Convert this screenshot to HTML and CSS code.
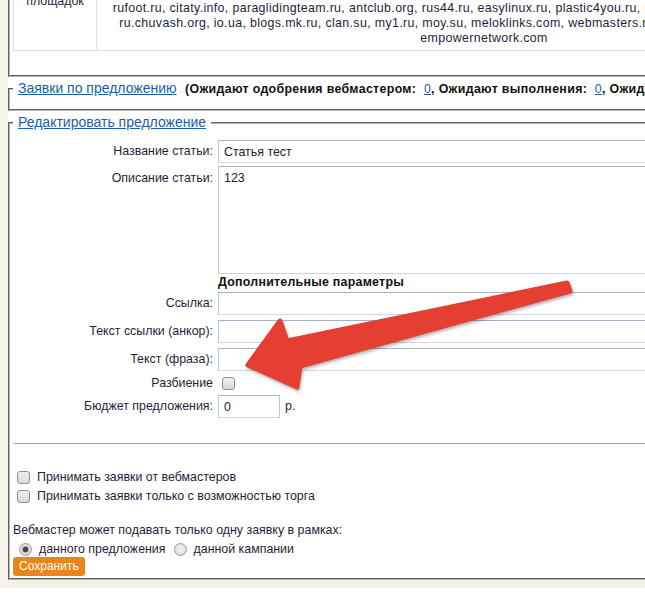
FILE: index.html
```html
<!DOCTYPE html>
<html lang="ru">
<head>
<meta charset="utf-8">
<title>Редактировать предложение</title>
<link rel="stylesheet" href="styles.css">
</head>
<body>
<div class="page">
  <div class="content">
    <fieldset class="fs fs-sites">
      <div class="sites">
        <div class="sites-label">Список<br>площадок</div>
        <div class="sites-list">
          <div>seoforum.ru, linkfeed.ru, blogun.ru, rotapost.ru, miralinks.ru, gogetlinks.net, sape.ru, liex.ru, seopult.ru,</div>
          <div>megaindex.ru, rookee.ru, prospero.ru, forum.searchengines.ru, mastertalk.ru, maultalk.com, nulled.cc, ucoz.ru,</div>
          <div>livejournal.com, liveinternet.ru, diary.ru, blogspot.com, wordpress.com, do.am, at.ua, 3dn.ru, ucoz.net,</div>
          <div>forum.ykt.ru, forum.e1.ru, forum.sibmama.ru, forum.littleone.ru, forum.auto.ru, forum.ixbt.com,</div>
          <div>rufoot.ru, citaty.info, paraglidingteam.ru, antclub.org, rus44.ru, easylinux.ru, plastic4you.ru, rusfishing.ru, avtoforum.spb.ru, i.ua,</div>
          <div>ru.chuvash.org, io.ua, blogs.mk.ru, clan.su, my1.ru, moy.su, meloklinks.com, webmasters.ru, forum.sakh.com, vsem.ru, kz.ru,</div>
          <div>empowernetwork.com</div>
        </div>
      </div>
    </fieldset>

    <fieldset class="fs fs-bids">
      <legend><a href="#" class="legend-link">Заявки по предложению</a> <b class="stats">(Ожидают одобрения вебмастером: &nbsp;<a href="#">0</a>, Ожидают выполнения: &nbsp;<a href="#">0</a>, Ожидают проверки: &nbsp;<a href="#">0</a>)</b></legend>
    </fieldset>

    <fieldset class="fs fs-edit">
      <legend><a href="#" class="legend-link">Редактировать предложение</a></legend>
      <div class="form">
        <div class="row r-title">
          <label class="lbl" for="title">Название статьи:</label>
          <input class="txt" id="title" type="text" value="Статья тест">
        </div>
        <div class="row r-desc">
          <label class="lbl lbl-top" for="desc">Описание статьи:</label>
          <textarea class="area" id="desc">123</textarea>
        </div>
        <div class="row r-head">
          <span class="lbl"></span>
          <b class="subhead">Дополнительные параметры</b>
        </div>
        <div class="row r-link">
          <label class="lbl" for="link">Ссылка:</label>
          <input class="txt" id="link" type="text">
        </div>
        <div class="row r-more">
          <label class="lbl" for="anchor">Текст ссылки (анкор):</label>
          <input class="txt" id="anchor" type="text">
        </div>
        <div class="row r-more">
          <label class="lbl" for="phrase">Текст (фраза):</label>
          <input class="txt" id="phrase" type="text">
        </div>
        <div class="row r-split">
          <label class="lbl" for="split">Разбиение</label>
          <input class="cb cb-form" id="split" type="checkbox">
        </div>
        <div class="row r-budget">
          <label class="lbl" for="budget">Бюджет предложения:</label>
          <input class="txt txt-short" id="budget" type="text" value="0">
          <span class="cur">р.</span>
        </div>
      </div>

      <hr class="sep">

      <div class="opts">
        <label class="opt"><input class="cb" type="checkbox">Принимать заявки от вебмастеров</label>
        <label class="opt"><input class="cb" type="checkbox">Принимать заявки только с возможностью торга</label>
      </div>

      <p class="note">Вебмастер может подавать только одну заявку в рамках:</p>
      <div class="radios">
        <label class="opt"><input class="rb" type="radio" name="scope" checked>данного предложения</label>
        <label class="opt"><input class="rb" type="radio" name="scope">данной кампании</label>
      </div>
      <button class="save" type="button">Сохранить</button>
    </fieldset>
  </div>
</div>

<svg class="arrow" width="645" height="615" viewBox="0 0 645 615" aria-hidden="true">
  <polygon points="567,283 287,341 280,321 248,365 297,387 300,366 570,291" />
</svg>
</body>
</html>
```

FILE: styles.css
```css
* { box-sizing: border-box; }

html {
  overflow: hidden;
  background: #fff;
}

body {
  margin: 0;
  font: 12.4px/15px "Liberation Sans", Arial, sans-serif;
  color: #1f1f38;
}

a {
  color: #1d5ea8;
  text-decoration: underline;
}

.page {
  width: 1100px;
  margin-top: -70px;
  padding: 0 0 4px 8px;
  background: #f4f2eb;
}

.content {
  background: #fff;
}

.fs {
  margin: 0 0 4px;
  padding: 4px 3px 9px;
  border: 2px groove #b4b4b4;
  min-width: 0;
}

.fs legend {
  height: 15px;
  padding: 0 5px;
  line-height: 15px;
  white-space: nowrap;
}

/* sites table */
.fs-sites {
  padding-bottom: 24px;
}

.sites {
  display: grid;
  grid-template-columns: 83px 774px;
  border: 1px solid #dedede;
}

.sites-label {
  display: flex;
  align-items: center;
  justify-content: center;
  text-align: center;
  border-right: 1px solid #dedede;
}

.sites-list {
  padding: 4px;
  text-align: center;
  white-space: nowrap;
  letter-spacing: 0.35px;
}

/* legends */
.legend-link {
  font-size: 14px;
  line-height: 15px;
}

.stats {
  margin-left: 5px;
  color: #111;
  letter-spacing: 0.33px;
}

.stats a {
  font-weight: normal;
}

/* form */
.form {
  margin-top: 6px;
}

.row {
  display: flex;
  align-items: center;
}

.lbl {
  flex: none;
  width: 200px;
  margin-right: 5px;
  text-align: right;
}

.lbl-top {
  align-self: flex-start;
  padding-top: 5px;
}

.r-desc { margin-top: 3px; }
.r-head { margin-top: 1px; }
.r-link { margin-top: 2px; }
.r-more { margin-top: 5px; }
.r-split { margin-top: 5px; }
.r-budget { margin-top: 4px; }

.subhead {
  color: #111;
  letter-spacing: 0.25px;
}

.txt,
.area {
  width: 620px;
  font: 12.4px/15px "Liberation Sans", Arial, sans-serif;
  color: #222;
  background: #fff;
  border: 1px solid;
  border-color: #a3b2c8 #bcc7d6 #cfd6e1 #bcc7d6;
  outline: none;
}

.txt {
  height: 23px;
  padding: 0 5px;
}

.txt-short {
  width: 62px;
}

.area {
  display: block;
  height: 108px;
  padding: 4px 5px;
  resize: none;
}

.cur {
  margin-left: 5px;
}

/* checkboxes & radios */
.cb,
.rb {
  appearance: none;
  -webkit-appearance: none;
  flex: none;
  width: 13px;
  height: 13px;
  margin: 0 7px 0 4px;
  border: 1px solid #8f8f8f;
  background: linear-gradient(#f0f0f0, #d9d9d9);
}

.cb {
  border-radius: 3px;
}

.rb {
  margin: 0 7px 0 6px;
  border-radius: 50%;
  border-color: #9a9a9a;
  background: radial-gradient(circle at 50% 40%, #f4f4f4, #d4d4d4);
}

.rb:checked {
  background: radial-gradient(circle, #444 0 2.6px, #cfcfcf 3.2px, #e6e6e6 6px);
}

.sep {
  margin: 25px 0 0;
  border: 0;
  border-top: 1px solid #a3a3a3;
  height: 0;
}

.opts {
  margin-top: 24px;
}

.opt {
  display: flex;
  align-items: center;
  height: 19px;
}

.note {
  margin: 17px 0 0;
}

.radios {
  display: flex;
  margin-top: 4px;
}

.radios .opt {
  height: 15px;
}

.radios .opt + .opt .rb {
  margin-left: 8px;
}

.save {
  display: block;
  margin-top: 0;
  height: 19px;
  padding: 0 6px;
  border: 0;
  border-radius: 3px;
  background: #ec8418;
  color: #fff;
  font: 12px/19px "Liberation Sans", Arial, sans-serif;
}

.fs-edit {
  padding-bottom: 2px;
}

/* annotation arrow */
.arrow {
  position: absolute;
  top: 0;
  left: 0;
  pointer-events: none;
  filter: drop-shadow(1px 2px 1.5px rgba(0, 0, 0, 0.3));
}

.arrow polygon {
  fill: #e53e33;
  stroke: #e53e33;
  stroke-width: 5;
  stroke-linejoin: round;
}
```
